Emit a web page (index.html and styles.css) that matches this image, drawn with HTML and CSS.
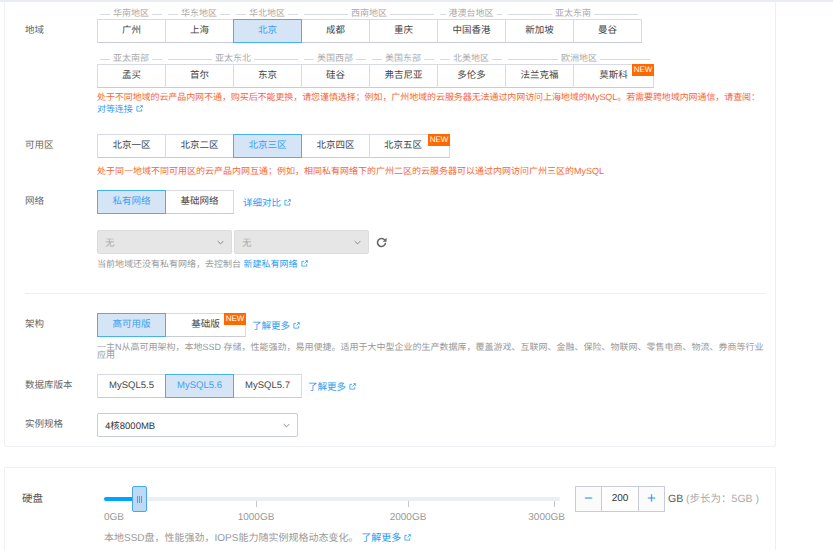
FILE: index.html
```html
<!DOCTYPE html>
<html lang="zh-CN">
<head>
    <meta charset="UTF-8">
    <title>云数据库购买</title>
    <link rel="stylesheet" href="styles.css">
</head>
<body>
    <svg class="icon-defs" width="0" height="0">
        <symbol id="ext" viewBox="0 0 8 8">
            <path d="M3.5 1.5H1v5.5h5.5V4.5M4 4l3.2-3.2M5 .7h2.3V3" fill="none" stroke="currentColor" stroke-width=".9"/>
        </symbol>
        <symbol id="chev" viewBox="0 0 10 6">
            <path d="M1 1l4 4 4-4" fill="none" stroke="currentColor" stroke-width="1.2"/>
        </symbol>
    </svg>

    <div class="card card-main">
        <!-- 地域 -->
        <div class="form-row">
            <div class="form-label label-region">地域</div>
            <div class="form-body">
                <div class="region-row">
                    <div class="group">
                        <div class="group-title"><span>华南地区</span></div>
                        <div class="btns"><div class="btn">广州</div></div>
                    </div>
                    <div class="group">
                        <div class="group-title"><span>华东地区</span></div>
                        <div class="btns"><div class="btn">上海</div></div>
                    </div>
                    <div class="group">
                        <div class="group-title"><span>华北地区</span></div>
                        <div class="btns"><div class="btn active">北京</div></div>
                    </div>
                    <div class="group">
                        <div class="group-title"><span>西南地区</span></div>
                        <div class="btns"><div class="btn">成都</div><div class="btn">重庆</div></div>
                    </div>
                    <div class="group">
                        <div class="group-title"><span>港澳台地区</span></div>
                        <div class="btns"><div class="btn">中国香港</div></div>
                    </div>
                    <div class="group">
                        <div class="group-title"><span>亚太东南</span></div>
                        <div class="btns"><div class="btn">新加坡</div><div class="btn">曼谷</div></div>
                    </div>
                </div>
                <div class="region-row region-row-2">
                    <div class="group">
                        <div class="group-title"><span>亚太南部</span></div>
                        <div class="btns"><div class="btn">孟买</div></div>
                    </div>
                    <div class="group">
                        <div class="group-title"><span>亚太东北</span></div>
                        <div class="btns"><div class="btn">首尔</div><div class="btn">东京</div></div>
                    </div>
                    <div class="group">
                        <div class="group-title"><span>美国西部</span></div>
                        <div class="btns"><div class="btn">硅谷</div></div>
                    </div>
                    <div class="group">
                        <div class="group-title"><span>美国东部</span></div>
                        <div class="btns"><div class="btn">弗吉尼亚</div></div>
                    </div>
                    <div class="group">
                        <div class="group-title"><span>北美地区</span></div>
                        <div class="btns"><div class="btn">多伦多</div></div>
                    </div>
                    <div class="group">
                        <div class="group-title"><span>欧洲地区</span></div>
                        <div class="btns"><div class="btn">法兰克福</div><div class="btn btn-wide">莫斯科<i class="new">NEW</i></div></div>
                    </div>
                </div>
                <p class="warn warn-region">处于不同地域的云产品内网不通，购买后不能更换，请您谨慎选择；例如，广州地域的云服务器无法通过内网访问上海地域的MySQL。若需要跨地域内网通信，请查阅：<br><a class="link">对等连接<svg class="ext"><use href="#ext"/></svg></a></p>
            </div>
        </div>

        <!-- 可用区 -->
        <div class="form-row row-zone">
            <div class="form-label">可用区</div>
            <div class="form-body">
                <div class="btns">
                    <div class="btn">北京一区</div>
                    <div class="btn">北京二区</div>
                    <div class="btn active">北京三区</div>
                    <div class="btn">北京四区</div>
                    <div class="btn btn-wide btn-left">北京五区<i class="new">NEW</i></div>
                </div>
                <p class="warn warn-zone">处于同一地域不同可用区的云产品内网互通；例如，相同私有网络下的广州二区的云服务器可以通过内网访问广州三区的MySQL</p>
            </div>
        </div>

        <!-- 网络 -->
        <div class="form-row row-net">
            <div class="form-label">网络</div>
            <div class="form-body">
                <div class="btns">
                    <div class="btn active">私有网络</div>
                    <div class="btn">基础网络</div>
                    <a class="link link-net">详细对比<svg class="ext"><use href="#ext"/></svg></a>
                </div>
                <div class="select-row">
                    <div class="select disabled">无<svg class="chev"><use href="#chev"/></svg></div>
                    <div class="select disabled">无<svg class="chev"><use href="#chev"/></svg></div>
                    <svg class="refresh" viewBox="0 0 12 12">
                        <path d="M9.6 3.4A4.4 4.4 0 1 0 10.4 6.4" fill="none" stroke="currentColor" stroke-width="1.7"/>
                        <path d="M11.5 .9v4.2H7.3z" fill="currentColor"/>
                    </svg>
                </div>
                <p class="help help-net">当前地域还没有私有网络，去控制台 <a class="link">新建私有网络<svg class="ext"><use href="#ext"/></svg></a></p>
            </div>
        </div>

        <div class="divider"></div>

        <!-- 架构 -->
        <div class="form-row">
            <div class="form-label">架构</div>
            <div class="form-body">
                <div class="btns">
                    <div class="btn active">高可用版</div>
                    <div class="btn btn-wide">基础版<i class="new">NEW</i></div>
                    <a class="link link-arch">了解更多<svg class="ext"><use href="#ext"/></svg></a>
                </div>
                <p class="help help-arch">一主N从高可用架构，本地SSD 存储，性能强劲，易用便捷。适用于大中型企业的生产数据库，覆盖游戏、互联网、金融、保险、物联网、零售电商、物流、券商等行业应用</p>
            </div>
        </div>

        <!-- 数据库版本 -->
        <div class="form-row row-db">
            <div class="form-label">数据库版本</div>
            <div class="form-body">
                <div class="btns">
                    <div class="btn">MySQL5.5</div>
                    <div class="btn active">MySQL5.6</div>
                    <div class="btn">MySQL5.7</div>
                    <a class="link link-db">了解更多<svg class="ext"><use href="#ext"/></svg></a>
                </div>
            </div>
        </div>

        <!-- 实例规格 -->
        <div class="form-row row-spec">
            <div class="form-label">实例规格</div>
            <div class="form-body">
                <div class="select select-spec">4核8000MB<svg class="chev"><use href="#chev"/></svg></div>
            </div>
        </div>
    </div>

    <div class="card card-disk">
        <div class="disk-row">
            <div class="disk-label">硬盘</div>
            <div class="slider">
                <div class="rail">
                    <div class="rail-fill"></div>
                    <div class="handle"><b></b><b></b><b></b></div>
                </div>
                <div class="marks">
                    <div class="mark mark-first">0GB</div>
                    <div class="mark">1000GB</div>
                    <div class="mark">2000GB</div>
                    <div class="mark mark-last">3000GB</div>
                </div>
                <p class="help help-disk">本地SSD盘，性能强劲，IOPS能力随实例规格动态变化。 <a class="link">了解更多<svg class="ext"><use href="#ext"/></svg></a></p>
            </div>
            <div class="stepper">
                <div class="step">−</div>
                <div class="step-value">200</div>
                <div class="step">+</div>
            </div>
            <div class="unit">GB <span>(步长为：5GB )</span></div>
        </div>
    </div>
</body>
</html>
```

FILE: styles.css
```css
html {
    overflow: hidden;
}

body {
    margin: 0;
    height: 550px;
    overflow: hidden;
    background: #fff;
    border-top: 2px solid #e9ecf1;
    box-sizing: border-box;
    font-family: "Liberation Sans", "Noto Sans CJK SC", sans-serif;
    font-size: 9.5px;
    color: #555;
    text-rendering: geometricPrecision;
}

p {
    margin: 0;
}

.icon-defs {
    position: absolute;
}

/* 卡片 */
.card {
    width: 772px;
    margin-left: 4px;
    box-sizing: border-box;
    border: 1px solid #eef0f3;
    background: #fff;
}

.card-main {
    height: 445px;
    border-top: none;
    border-radius: 0 0 3px 3px;
    padding-top: 5px;
}

.card-disk {
    margin-top: 20px;
    padding-top: 18px;
    height: 90px;
    border-bottom: none;
}

/* 表单行 */
.form-row {
    display: flex;
}

.form-label {
    width: 72px;
    margin-left: 20px;
    flex: none;
    line-height: 24px;
    color: #666;
}

.label-region {
    margin-top: 12px;
}

.form-body {
    flex: 1;
    padding-right: 10px;
}

.row-zone {
    margin-top: 19px;
}

.row-net {
    margin-top: 13px;
}

.row-db {
    margin-top: 15px;
}

.row-spec {
    margin-top: 15px;
}

.divider {
    height: 1px;
    margin: 23px 10px 19px 20px;
    background: #eceef2;
}

/* 地域分组 */
.region-row {
    display: flex;
}

.region-row-2 {
    margin-top: 9px;
}

.group-title {
    display: flex;
    align-items: center;
    gap: 3px;
    height: 12px;
    padding: 0 3px;
    font-size: 9px;
    color: #aaa;
    white-space: nowrap;
}

.group-title span {
    margin-top: -1px;
}

.group-title::before,
.group-title::after {
    content: "";
    flex: 1;
    height: 1px;
    margin-top: 3px;
    background: #d8dade;
}

/* 按钮组 */
.btns {
    display: flex;
    align-items: center;
}

.btn {
    position: relative;
    box-sizing: border-box;
    flex: none;
    width: 69px;
    height: 24px;
    margin-right: -1px;
    border: 1px solid #d9dbe2;
    border-bottom-color: #c9ccd6;
    line-height: 22px;
    text-align: center;
    background: #fff;
    color: #444;
}

.btn-wide {
    width: 81px;
}

.btn-left {
    text-align: left;
    padding-left: 14px;
}

.btn.active {
    z-index: 1;
    background: #d5e5f6;
    border-color: #45b1f5;
    color: #3d9ff0;
}

.new {
    position: absolute;
    top: -1px;
    right: -1px;
    width: 22px;
    height: 12px;
    background: #ff6a00;
    color: #fff;
    font-size: 8px;
    font-style: normal;
    line-height: 11px;
    text-align: center;
}

/* 链接 */
.link {
    color: #2a9df4;
}

.link-net {
    margin-left: 10px;
}

.link-arch {
    margin-left: 7px;
}

.link-db {
    margin-left: 7px;
}

.ext {
    width: 7px;
    height: 7px;
    margin-left: 3px;
}

/* 提示文字 */
.warn {
    font-size: 9px;
    line-height: 11.5px;
    color: #f4673a;
    white-space: nowrap;
}

.warn-region {
    margin-top: 4px;
    letter-spacing: -0.08px;
}

.warn-zone {
    margin-top: 7px;
    line-height: 12px;
}

.help {
    font-size: 9px;
    color: #999;
}

.help-net {
    margin-top: 4px;
    line-height: 12px;
}

.help-arch {
    margin-top: 6px;
    line-height: 8px;
}

.help-disk {
    margin-top: 9px;
    font-size: 10px;
    line-height: 12px;
    white-space: nowrap;
}

/* 下拉框 */
.select-row {
    display: flex;
    align-items: center;
    gap: 2px;
    margin-top: 16px;
}

.select {
    display: flex;
    align-items: center;
    justify-content: space-between;
    box-sizing: border-box;
    width: 135px;
    height: 24px;
    padding: 0 7px;
    border: 1px solid #d9dbe2;
    border-radius: 2px;
    color: #333;
}

.select.disabled {
    background: #e6e6e6;
    border-color: #dcdcdc;
    color: #aaa;
}

.select-spec {
    width: 201px;
    border-color: #c9ccd6;
}

.chev {
    width: 7px;
    height: 5px;
    color: #777;
}

.refresh {
    width: 11px;
    height: 11px;
    margin-left: 5px;
    color: #666;
}

/* 硬盘 */
.disk-row {
    display: flex;
    align-items: flex-start;
}

.disk-label {
    width: 99px;
    padding-left: 17px;
    box-sizing: border-box;
    flex: none;
    line-height: 26px;
    font-size: 10.5px;
    color: #555;
}

.slider {
    width: 461px;
    flex: none;
    padding-top: 11px;
}

.rail {
    position: relative;
    width: 456px;
    height: 4px;
    border-radius: 2px;
    background: #ebeef4;
}

.rail-fill {
    width: 30px;
    height: 4px;
    border-radius: 2px 0 0 2px;
    background: #00a4ff;
}

.handle {
    position: absolute;
    top: -11px;
    left: 28px;
    box-sizing: border-box;
    display: flex;
    align-items: center;
    justify-content: center;
    gap: 1px;
    width: 15px;
    height: 26px;
    border: 1px solid #45a8ef;
    border-radius: 2px;
    background: #bcdaf5;
}

.handle b {
    width: 1px;
    height: 7px;
    background: #4a9fe6;
}

.marks {
    display: grid;
    grid-template-columns: 76px 152px 152px 81px;
    color: #999;
    font-size: 10px;
    line-height: 12px;
}

.mark {
    text-align: center;
    white-space: nowrap;
}

.mark::before {
    content: "";
    display: block;
    width: 1px;
    height: 6px;
    margin: 0 auto 5px;
    background: #c4c7cf;
}

.mark-first::before {
    background: transparent;
}

.mark-first {
    text-align: left;
}

.mark-last {
    text-align: right;
}

.mark-last::before {
    margin: 0 10px 5px auto;
}

/* 步进器 */
.stepper {
    display: flex;
    box-sizing: border-box;
    height: 26px;
    margin-left: 10px;
    border: 1px solid #c9ccd6;
    background: #fbfbfc;
}

.step {
    width: 25px;
    line-height: 23px;
    font-size: 15px;
    text-align: center;
    color: #2a9df4;
}

.step-value {
    width: 36px;
    border-left: 1px solid #c9ccd6;
    border-right: 1px solid #c9ccd6;
    background: #fff;
    line-height: 24px;
    text-align: center;
    font-size: 10px;
    color: #333;
}

.unit {
    margin-left: 3px;
    line-height: 26px;
    font-size: 10.5px;
    color: #555;
    white-space: nowrap;
}

.unit span {
    color: #aaa;
}
```
